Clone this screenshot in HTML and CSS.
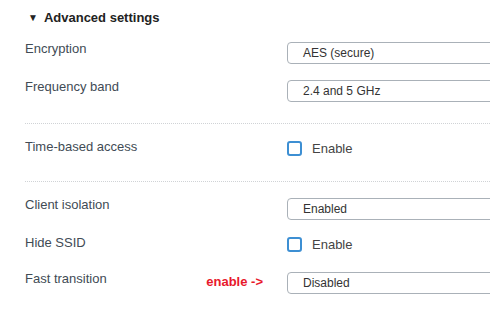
FILE: index.html
```html
<!DOCTYPE html>
<html lang="en">

<head>
    <meta charset="UTF-8">
    <meta name="viewport" content="width=device-width, initial-scale=1.0">
    <title>Advanced settings</title>
    <link rel="stylesheet" href="styles.css">
</head>

<body>
    <div class="painel">
        <h3 class="titulo"><span class="seta">&#9660;</span>Advanced settings</h3>

        <div class="linha">
            <span class="rotulo">Encryption</span>
            <div class="seletor">AES (secure)</div>
        </div>
        <div class="linha">
            <span class="rotulo">Frequency band</span>
            <div class="seletor">2.4 and 5 GHz</div>
        </div>

        <hr class="divisor">

        <div class="linha caixa">
            <span class="rotulo">Time-based access</span>
            <label class="opcao"><span class="check"></span>Enable</label>
        </div>

        <hr class="divisor">

        <div class="linha">
            <span class="rotulo">Client isolation</span>
            <div class="seletor">Enabled</div>
        </div>
        <div class="linha caixa">
            <span class="rotulo">Hide SSID</span>
            <label class="opcao"><span class="check"></span>Enable</label>
        </div>
        <div class="linha">
            <span class="rotulo">Fast transition<span class="nota">enable -&gt;</span></span>
            <div class="seletor">Disabled</div>
        </div>
    </div>
</body>

</html>
```

FILE: styles.css
```css
body {
    margin: 0;
    font-family: "Liberation Sans", Arial, sans-serif;
    background: #fff;
    overflow: hidden;
}

.painel {
    padding: 10px 0 0 25px;
    width: 465px;
    height: 302px;
    overflow: hidden;
}

.titulo {
    margin: 0 0 15px 0;
    padding-left: 3px;
    font-size: 13px;
    line-height: 16px;
    font-weight: bold;
    color: #222;
}

.seta {
    font-size: 10px;
    margin-right: 6px;
    vertical-align: 1px;
}

.linha {
    display: flex;
    align-items: flex-start;
    height: 38px;
}

.linha.caixa {
    height: 36px;
}

.rotulo {
    display: flex;
    width: 262px;
    flex-shrink: 0;
    font-size: 13px;
    line-height: 16px;
    color: #414b55;
}

.nota {
    margin-left: auto;
    margin-right: 24px;
    margin-top: 3px;
    font-size: 13px;
    font-weight: bold;
    color: #e8192c;
}

.seletor {
    flex-shrink: 0;
    width: 230px;
    height: 20px;
    margin-top: 1px;
    padding-left: 15px;
    border: 1px solid #aab1b8;
    border-radius: 4px;
    font-size: 12px;
    line-height: 20px;
    color: #333;
}

.opcao {
    display: flex;
    align-items: center;
    margin-top: 2px;
    font-size: 13px;
    color: #444;
}

.check {
    width: 11px;
    height: 11px;
    margin-right: 10px;
    border: 2px solid #3d8fd3;
    border-radius: 3px;
}

.divisor {
    margin: 6px 0 15px 0;
    border: 0;
    border-top: 1px dotted #d0d3d6;
}
```
